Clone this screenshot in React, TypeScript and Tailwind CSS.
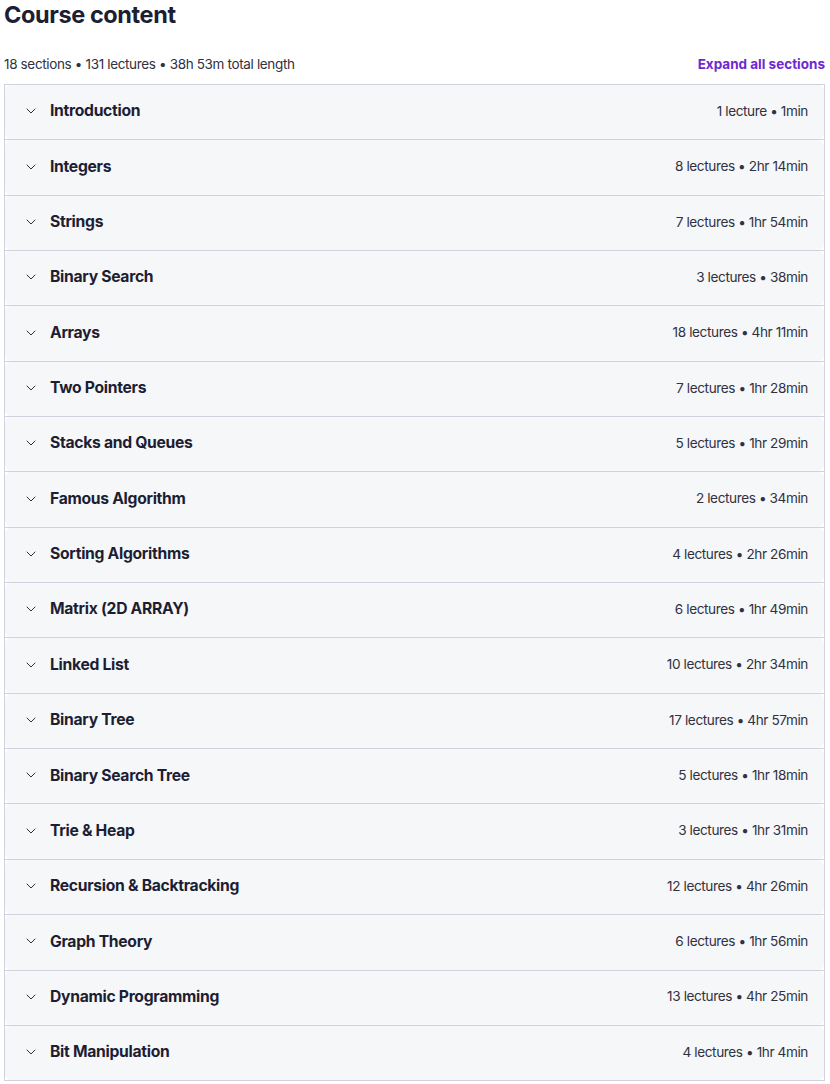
import { ChevronDown } from "lucide-react";

type Section = { title: string; lectures: number; length: string };

const sections: Section[] = [
  { title: "Introduction", lectures: 1, length: "1min" },
  { title: "Integers", lectures: 8, length: "2hr 14min" },
  { title: "Strings", lectures: 7, length: "1hr 54min" },
  { title: "Binary Search", lectures: 3, length: "38min" },
  { title: "Arrays", lectures: 18, length: "4hr 11min" },
  { title: "Two Pointers", lectures: 7, length: "1hr 28min" },
  { title: "Stacks and Queues", lectures: 5, length: "1hr 29min" },
  { title: "Famous Algorithm", lectures: 2, length: "34min" },
  { title: "Sorting Algorithms", lectures: 4, length: "2hr 26min" },
  { title: "Matrix (2D ARRAY)", lectures: 6, length: "1hr 49min" },
  { title: "Linked List", lectures: 10, length: "2hr 34min" },
  { title: "Binary Tree", lectures: 17, length: "4hr 57min" },
  { title: "Binary Search Tree", lectures: 5, length: "1hr 18min" },
  { title: "Trie & Heap", lectures: 3, length: "1hr 31min" },
  { title: "Recursion & Backtracking", lectures: 12, length: "4hr 26min" },
  { title: "Graph Theory", lectures: 6, length: "1hr 56min" },
  { title: "Dynamic Programming", lectures: 13, length: "4hr 25min" },
  { title: "Bit Manipulation", lectures: 4, length: "1hr 4min" },
];

const SectionRow = ({ section }: { section: Section }) => {
  return (
    <div className="border-b border-[#d1d2e0] last:border-b-0">
      <button className="flex h-[54.35px] w-full items-center rounded-[6px] bg-[#f6f7f9] pl-[18px] pr-[16px] pb-[2px] text-left">
        <ChevronDown size={16} strokeWidth={1.5} className="text-[#303141]" />
        <span className="ml-[11px] flex-1 text-[15.7px] font-bold tracking-[-0.3px] text-[#1d1e33]">
          {section.title}
        </span>
        <span className="text-[13.6px] tracking-[-0.4px] text-[#303141]">
          {section.lectures} {section.lectures === 1 ? "lecture" : "lectures"} • {section.length}
        </span>
      </button>
    </div>
  );
};

export default function App() {
  return (
    <div className="min-h-screen bg-white pl-[4px] pr-[5px] font-['Inter',sans-serif]">
      <h2 className="pt-[1px] text-[23.5px] leading-[28px] font-bold tracking-[-0.4px] text-[#1d1e33]">
        Course content
      </h2>
      <div className="mt-[25px] flex items-center justify-between text-[13.5px] leading-[20px]">
        <span className="tracking-[-0.35px] text-[#303141]">
          18 sections • 131 lectures • 38h 53m total length
        </span>
        <button className="font-bold text-[#6d28d2]">Expand all sections</button>
      </div>
      <div className="mt-[10px] w-[821px] border border-[#d1d2e0]">
        {sections.map((s) => (
          <SectionRow key={s.title} section={s} />
        ))}
      </div>
    </div>
  );
}
